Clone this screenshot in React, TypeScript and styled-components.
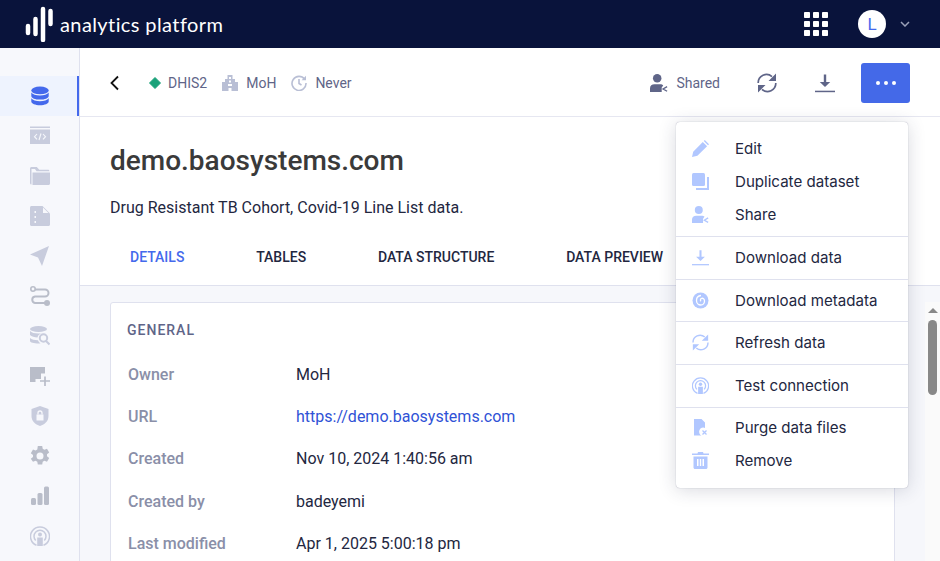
import React from 'react';
import styled, { createGlobalStyle } from 'styled-components';

const GlobalStyle = createGlobalStyle`
  html, body {
    margin: 0;
    padding: 0;
    height: 100%;
    overflow: hidden;
    background: #fff;
    font-family: Roboto, "Liberation Sans", sans-serif;
  }
  * { box-sizing: border-box; }
`;

const Page = styled.div`
  position: relative;
  width: 940px;
  height: 561px;
  display: flex;
  flex-direction: column;
  overflow: hidden;
`;

const TopBar = styled.header`
  height: 48px;
  flex: none;
  background: #09133b;
  display: flex;
  align-items: center;
  padding: 0 30px 0 25px;
`;

const Logo = styled.div`
  display: flex;
  align-items: center;
  gap: 6px;
  flex: 1;
`;

const LogoText = styled.span`
  color: #fff;
  font-family: Lato, sans-serif;
  font-size: 20px;
  font-weight: 400;
  letter-spacing: 0.4px;
  margin-top: -1px;
`;

const Avatar = styled.div`
  width: 28px;
  height: 28px;
  border-radius: 50%;
  background: #fff;
  color: #4469ec;
  font-size: 17px;
  display: flex;
  align-items: center;
  justify-content: center;
  margin: 0 14px 0 30px;
`;

const Body = styled.div`
  flex: 1;
  display: flex;
  min-height: 0;
`;

const Sidebar = styled.nav`
  width: 80px;
  flex: none;
  background: #f7f8fc;
  border-right: 1px solid #dfe1ee;
  padding-top: 28px;
`;

const SideItem = styled.div<{ $active?: boolean; $grey?: boolean }>`
  height: 40px;
  display: flex;
  align-items: center;
  justify-content: center;
  color: ${p => (p.$active ? '#4469ec' : p.$grey ? '#b9bdc9' : '#c8ccdd')};
  background: ${p => (p.$active ? '#eef3fe' : 'transparent')};
  box-shadow: ${p => (p.$active ? 'inset -2px 0 0 #4469ec' : 'none')};
`;

const Main = styled.main`
  flex: 1;
  min-width: 0;
  display: flex;
  flex-direction: column;
`;

const ActionBar = styled.div`
  height: 69px;
  flex: none;
  border-bottom: 1px solid #e6e7f1;
  display: flex;
  align-items: center;
  padding: 2px 30px 0 30px;
`;

const BackButton = styled.div`
  display: flex;
  margin-right: 29px;
  color: #111;
`;

const Meta = styled.span`
  display: flex;
  align-items: center;
  gap: 8px;
  color: #5f6588;
  font-size: 14px;
  margin-right: 15px;
`;

const Spacer = styled.div`
  flex: 1;
`;

const IconAction = styled.div<{ $gap: number }>`
  display: flex;
  align-items: center;
  color: #5f6588;
  margin-left: ${p => p.$gap}px;
`;

const MoreButton = styled.div`
  width: 49px;
  height: 40px;
  border-radius: 3px;
  background: #4469e8;
  display: flex;
  align-items: center;
  justify-content: center;
  gap: 4px;
  margin-left: 26px;
`;

const Dot = styled.i`
  width: 4px;
  height: 4px;
  border-radius: 50%;
  background: #fff;
`;

const TitleBlock = styled.section`
  flex: none;
  padding: 26px 30px 0;
  border-bottom: 1px solid #dfe1ee;
  height: 169px;
`;

const Title = styled.h1`
  margin: 0;
  font-size: 28px;
  line-height: 36px;
  font-weight: 500;
  color: #3a3a3a;
`;

const Description = styled.p`
  margin: 19px 0 0;
  font-size: 16px;
  line-height: 20px;
  color: #23273f;
`;

const Tabs = styled.div`
  display: flex;
  gap: 71.8px;
  padding-left: 20px;
  margin-top: 29px;
`;

const Tab = styled.span<{ $active?: boolean }>`
  font-size: 14px;
  line-height: 20px;
  font-weight: 500;
  text-transform: uppercase;
  color: ${p => (p.$active ? '#4469ec' : '#23273f')};
`;

const ContentRow = styled.div`
  flex: 1;
  min-height: 0;
  display: flex;
  background: #f6f7fb;
  padding-top: 16px;
`;

const Content = styled.div`
  flex: 1;
  min-width: 0;
  padding: 0 30px;
`;

const Card = styled.div`
  background: #fff;
  border: 1px solid #dfe1ee;
  border-radius: 3px;
  padding: 17px 16px 0 17px;
  height: 400px;
`;

const CardTitle = styled.h2`
  margin: 0 0 13px -1px;
  font-size: 14px;
  line-height: 20px;
  font-weight: 500;
  letter-spacing: 1px;
  color: #5f6588;
`;

const InfoRow = styled.div`
  display: flex;
  height: 42.3px;
  align-items: center;
  font-size: 16px;
`;

const InfoLabel = styled.span`
  width: 168px;
  font-weight: 500;
  color: #8a8fa8;
`;

const InfoValue = styled.span`
  color: #23273f;
`;

const InfoLink = styled.span`
  color: #2f52d6;
`;

const ScrollTrack = styled.div`
  width: 15px;
  flex: none;
  background: #fafafa;
  display: flex;
  flex-direction: column;
  align-items: center;
  padding-top: 6px;
`;

const ScrollArrow = styled.div`
  width: 0;
  height: 0;
  border-left: 5px solid transparent;
  border-right: 5px solid transparent;
  border-bottom: 5px solid #888;
  margin-bottom: 7px;
`;

const ScrollThumb = styled.div`
  width: 9px;
  height: 75px;
  border-radius: 5px;
  background: #888;
`;

const Menu = styled.div`
  position: absolute;
  left: 676px;
  top: 122px;
  width: 232px;
  height: 366px;
  background: #fff;
  border-radius: 4px;
  box-shadow: 0 0 1px rgba(40, 44, 80, 0.45), 0 2px 18px rgba(40, 44, 80, 0.18);
`;

const MenuSection = styled.div`
  padding: 4.1px 0 4.65px;
  border-top: 1px solid #dfe1ee;
  &:first-child {
    border-top: none;
    padding: 9.5px 0 5.35px;
  }
  &:last-child {
    padding: 3.4px 0 0;
  }
`;

const MenuItem = styled.div`
  height: 33px;
  display: flex;
  align-items: center;
  padding-left: 16px;
  color: #23273f;
  font-family: Inter, sans-serif;
  font-size: 15.1px;
`;

const MenuIcon = styled.span`
  width: 43px;
  flex: none;
  display: flex;
  color: #b1c7ff;
`;

type IconProps = { size?: number };

const Svg = ({ size = 20, children }: IconProps & { children: React.ReactNode }) => (
  <svg width={size} height={size} viewBox="0 0 20 20" fill="currentColor">
    {children}
  </svg>
);

const DatabaseIcon = () => (
  <Svg>
    <ellipse cx="10" cy="4.4" rx="8.7" ry="3.9" />
    <path d="M1.3 6.6c1.3 2 4.7 3 8.7 3s7.400-1 8.700-3v3.300c0 2.100-3.900 3.700-8.700 3.700s-8.700-1.600-8.700-3.700z" />
    <path d="M1.300 12.300c1.300 2 4.700 3 8.700 3s7.400-1 8.700-3v3.300c0 2.100-3.900 3.700-8.700 3.700s-8.700-1.600-8.700-3.700z" />
  </Svg>
);

const CodeIcon = () => (
  <Svg>
    <rect x="0" y="0.500" width="20" height="1.500" />
    <path d="M0 3.500h20V18H0z" />
    <path d="M7 8l-2.500 2.700L7 13.400M13 8l2.500 2.700L13 13.400M11 7.500l-2 6.500" fill="none" stroke="#f7f8fc" strokeWidth="1.100" />
  </Svg>
);

const FolderIcon = () => (
  <Svg>
    <path d="M0 2.500C0 1.700.7 1 1.500 1h5.300l2.500 2.700h8.700c.8 0 1.500.7 1.500 1.500h-13L5 3H1.500v15.500A1.500 1.500 0 0 1 0 17z" />
    <path d="M2.500 6.500H20V17.500c0 .8-.7 1.500-1.500 1.500h-16z" />
  </Svg>
);

const FileIcon = () => (
  <Svg>
    <path d="M1.500 0H12.500L20 7.500V18.500c0 .8-.7 1.500-1.500 1.500H1.500C.7 20 0 19.300 0 18.500V1.500C0 .7.7 0 1.500 0z" />
    <path d="M13 1.500V7h5.500zM4.500 5h1.500v2H4.500zM4.500 10h1.500v2H4.500zM4.500 15h1.500v2H4.500z" fill="#f7f8fc" />
  </Svg>
);

const SendIcon = () => (
  <Svg>
    <path d="M19 0L0 8.500l8 3 4 8.500z" />
  </Svg>
);

const RouteIcon = () => (
  <Svg>
    <path d="M3.500 3.500H15a3.500 3.500 0 0 1 0 7H5a3.300 3.300 0 0 0 0 6.500h11" fill="none" stroke="currentColor" strokeWidth="2" />
    <circle cx="3" cy="3" r="2.200" fill="#f7f8fc" stroke="currentColor" strokeWidth="1.600" />
    <circle cx="17" cy="17" r="3" />
  </Svg>
);

const DataSearchIcon = () => (
  <Svg>
    <ellipse cx="8.500" cy="3" rx="8.500" ry="3" />
    <path d="M0 5c1.500 1.700 4.500 2.500 8.500 2.500 1.500 0 3-.1 4.300-.5-2.500.3-5 2-5.300 4.500C4.500 11.400 1.500 10.500 0 9zM0 12c1.600 1.400 4.500 2.200 8 2.300.5 1.200 1.300 2.300 2.500 3-.7.100-1.300.200-2 .200C4 17.500 0 16.500 0 15z" />
    <circle cx="13.500" cy="12" r="3.700" fill="none" stroke="currentColor" strokeWidth="2" />
    <path d="M16 15l3.500 3.500" stroke="currentColor" strokeWidth="2" />
  </Svg>
);

const AddBlockIcon = () => (
  <Svg>
    <path d="M0 1h15v6.500h-4V13H5.500v3H0z" />
    <path d="M15 10.500v9.500M10 15h10" stroke="currentColor" strokeWidth="1.700" fill="none" />
  </Svg>
);

const ShieldIcon = () => (
  <Svg>
    <path d="M10 0l8.500 3v7c0 5-3.600 8.500-8.500 10-4.900-1.500-8.500-5-8.500-10V3z" />
    <path d="M6.500 8.500h7v6h-7z" fill="#f7f8fc" />
    <path d="M8 8.500V7a2 2 0 0 1 4 0v1.500" fill="none" stroke="#f7f8fc" strokeWidth="1.300" />
  </Svg>
);

const GearIcon = () => (
  <Svg>
    <path
      fillRule="evenodd"
      d="M7.800 0h4.400l.5 2.800 1.700.9 2.600-1 2.200 3.800-2.200 1.800v1.900l2.200 1.800-2.200 3.800-2.600-1-1.700.9-.5 2.800H7.800l-.5-2.800-1.700-.9-2.600 1L.8 12.700 3 10.900V9L.8 7.200 3 3.400l2.600 1 1.700-.9zM10 6.500a3.500 3.500 0 1 0 0 7 3.500 3.500 0 0 0 0-7z"
    />
  </Svg>
);

const SignalIcon = () => (
  <Svg>
    <rect x="1" y="12" width="5" height="7" rx="1.500" />
    <rect x="7.500" y="7" width="5" height="12" rx="1.500" />
    <rect x="14" y="0.500" width="5" height="18.500" rx="1.500" />
  </Svg>
);

const PodcastIcon = ({ size = 20 }: IconProps) => (
  <Svg size={size}>
    <path d="M6.500 19.300A9.500 9.500 0 1 1 13.500 19.300" fill="none" stroke="currentColor" strokeWidth="1.500" />
    <path d="M5.700 14.500a6 6 0 1 1 8.600 0" fill="none" stroke="currentColor" strokeWidth="1.500" />
    <circle cx="10" cy="8.500" r="2" />
    <path d="M7.200 11.500h5.600V20H7.200z" />
  </Svg>
);

const ChevronLeft = () => (
  <svg width="10" height="16" viewBox="0 0 10 16" fill="none" stroke="currentColor" strokeWidth="1.800">
    <path d="M8 1.500L1.500 8 8 14.500" />
  </svg>
);

const Diamond = () => (
  <svg width="11" height="14" viewBox="0 0 11 14" overflow="visible">
    <path d="M6 1.500L11.500 7 6 12.500.5 7z" fill="#1ba27a" stroke="#1ba27a" strokeLinejoin="round" />
  </svg>
);

const BuildingIcon = () => (
  <svg width="16" height="16" viewBox="0 0 16 16" fill="#b9bfd5">
    <path fillRule="evenodd" d="M0 7h3V4h2.500V0h5v4H13v3h3v9H9.500v-3h-3v3H0zM7 2v2h2V2zM7 5.500v2h2v-2zM6 9v2h4V9z" />
  </svg>
);

const HistoryIcon = () => (
  <svg width="16" height="16" viewBox="0 0 16 16" fill="none" stroke="#b9bfd5" strokeWidth="1.600">
    <path d="M13.600 4.200A7 7 0 1 0 15 8" />
    <path d="M15 .8v4.400h-4.400z" fill="#b9bfd5" stroke="none" />
    <path d="M8 4v4.500l2.500 1.500" />
  </svg>
);

const UserShareIcon = ({ size = 20 }: IconProps) => (
  <Svg size={size}>
    <circle cx="8" cy="4.800" r="4.700" />
    <path d="M0 20v-4c0-3 2-4.500 5-4.500h6c2 0 3 .5 3.700 1.200L13 15v5z" />
    <path d="M19 14l-4.500 2.700L19 19.200" fill="none" stroke="currentColor" strokeWidth="1.500" />
  </Svg>
);

const RefreshIcon = ({ size = 20 }: IconProps) => (
  <Svg size={size}>
    <path d="M1.200 10A8.300 8.300 0 0 1 15 3.600M18.800 10A8.300 8.300 0 0 1 5 16.400" fill="none" stroke="currentColor" strokeWidth="1.700" />
    <path d="M19 .5V8h-7.500zM1 19.500V12h7.500z" />
  </Svg>
);

const DownloadIcon = ({ size = 20 }: IconProps) => (
  <Svg size={size}>
    <path d="M8.800 1.500h2.400v7.500h4L10 14 4.800 9h4z" />
    <rect x="0" y="17.700" width="20" height="1.500" />
  </Svg>
);

const PencilIcon = () => (
  <svg width="17" height="17" viewBox="0 0 17 17" fill="currentColor">
    <path d="M0 17l1.200-5.300L10.800 2l4.300 4.300-9.700 9.500zM11.800 1l1-1 4.200 4.200-1 1z" />
  </svg>
);

const DuplicateIcon = () => (
  <svg width="17" height="17" viewBox="0 0 17 17" fill="currentColor">
    <rect x="0" y="0" width="13" height="13" rx="1.500" />
    <path d="M15 4h2v13H4v-2h11z" />
  </svg>
);

const SpiralIcon = () => (
  <svg width="17" height="17" viewBox="0 0 17 17">
    <circle cx="8.500" cy="8.500" r="8" fill="currentColor" />
    <path d="M9 3.500c-3 .3-4.500 2.500-4.500 5s2 4.500 4.300 4.500 3.700-2 3.700-4-1.500-3-2.800-2.700-1.700 2.200-.7 3" fill="none" stroke="#fff" strokeWidth="1.300" />
  </svg>
);

const PurgeFileIcon = () => (
  <svg width="17" height="17" viewBox="0 0 17 17" fill="currentColor">
    <path d="M2 0h7.500L13 3.500V9a4 4 0 0 0-3.500 7.500H2z" />
    <path d="M10.500 11.500l4 4M14.500 11.500l-4 4" stroke="currentColor" strokeWidth="1.300" />
  </svg>
);

const TrashIcon = () => (
  <svg width="17" height="17" viewBox="0 0 17 17" fill="currentColor">
    <path d="M6 0h5l.5 1.500H17V3H0V1.500h5.500z" />
    <path fillRule="evenodd" d="M1.500 4.500h14V15.500c0 .8-.7 1.500-1.500 1.500H3c-.8 0-1.500-.7-1.500-1.500zM5 7v7h1.500V7zM7.800 7v7h1.400V7zM10.500 7v7H12V7z" />
  </svg>
);

const LogoMark = () => (
  <svg width="29" height="36" viewBox="0 0 29 36" stroke="#fff" strokeWidth="4.500" strokeLinecap="round">
    <path d="M3 20v7M10.500 13v15M18 3v31M25.500 5v13" />
  </svg>
);

const AppsGrid = () => (
  <svg width="24" height="24" viewBox="0 0 24 24" fill="#fff">
    {[0, 9, 18].flatMap(y =>
      [0, 9, 18].map(x => <rect key={`${x}-${y}`} x={x} y={y} width="6" height="6" rx="0.800" />)
    )}
  </svg>
);

const sideIcons = [
  { name: 'code', icon: <CodeIcon /> },
  { name: 'folder', icon: <FolderIcon /> },
  { name: 'file', icon: <FileIcon /> },
  { name: 'send', icon: <SendIcon /> },
  { name: 'route', icon: <RouteIcon />, grey: true },
  { name: 'search', icon: <DataSearchIcon /> },
  { name: 'add', icon: <AddBlockIcon />, grey: true },
  { name: 'shield', icon: <ShieldIcon /> },
  { name: 'gear', icon: <GearIcon />, grey: true },
  { name: 'signal', icon: <SignalIcon />, grey: true },
  { name: 'podcast', icon: <PodcastIcon /> },
];

const tabs = ['Details', 'Tables', 'Data structure', 'Data preview'];

const menuSections = [
  [
    { label: 'Edit', icon: <PencilIcon /> },
    { label: 'Duplicate dataset', icon: <DuplicateIcon /> },
    { label: 'Share', icon: <UserShareIcon size={17} /> },
  ],
  [{ label: 'Download data', icon: <DownloadIcon size={17} /> }],
  [{ label: 'Download metadata', icon: <SpiralIcon /> }],
  [{ label: 'Refresh data', icon: <RefreshIcon size={17} /> }],
  [{ label: 'Test connection', icon: <PodcastIcon size={17} /> }],
  [
    { label: 'Purge data files', icon: <PurgeFileIcon /> },
    { label: 'Remove', icon: <TrashIcon /> },
  ],
];

export default function App() {
  return (
    <Page>
      <GlobalStyle />
      <TopBar>
        <Logo>
          <LogoMark />
          <LogoText>analytics platform</LogoText>
        </Logo>
        <AppsGrid />
        <Avatar>L</Avatar>
        <svg width="10" height="6" viewBox="0 0 10 6" fill="none" stroke="#9aa0b8" strokeWidth="1.500">
          <path d="M1 1l4 4 4-4" />
        </svg>
      </TopBar>
      <Body>
        <Sidebar>
          <SideItem $active>
            <DatabaseIcon />
          </SideItem>
          {sideIcons.map(item => (
            <SideItem key={item.name} $grey={item.grey}>
              {item.icon}
            </SideItem>
          ))}
        </Sidebar>
        <Main>
          <ActionBar>
            <BackButton>
              <ChevronLeft />
            </BackButton>
            <Meta>
              <Diamond /> DHIS2
            </Meta>
            <Meta>
              <BuildingIcon /> MoH
            </Meta>
            <Meta>
              <HistoryIcon /> Never
            </Meta>
            <Spacer />
            <Meta>
              <UserShareIcon size={18} /> Shared
            </Meta>
            <IconAction $gap={22}>
              <RefreshIcon />
            </IconAction>
            <IconAction $gap={38}>
              <DownloadIcon />
            </IconAction>
            <MoreButton>
              <Dot />
              <Dot />
              <Dot />
            </MoreButton>
          </ActionBar>
          <TitleBlock>
            <Title>demo.baosystems.com</Title>
            <Description>Drug Resistant TB Cohort, Covid-19 Line List data.</Description>
            <Tabs>
              {tabs.map((tab, i) => (
                <Tab key={tab} $active={i === 0}>
                  {tab}
                </Tab>
              ))}
            </Tabs>
          </TitleBlock>
          <ContentRow>
            <Content>
              <Card>
                <CardTitle>GENERAL</CardTitle>
                <InfoRow>
                  <InfoLabel>Owner</InfoLabel>
                  <InfoValue>MoH</InfoValue>
                </InfoRow>
                <InfoRow>
                  <InfoLabel>URL</InfoLabel>
                  <InfoLink>https://demo.baosystems.com</InfoLink>
                </InfoRow>
                <InfoRow>
                  <InfoLabel>Created</InfoLabel>
                  <InfoValue>Nov 10, 2024 1:40:56 am</InfoValue>
                </InfoRow>
                <InfoRow>
                  <InfoLabel>Created by</InfoLabel>
                  <InfoValue>badeyemi</InfoValue>
                </InfoRow>
                <InfoRow>
                  <InfoLabel>Last modified</InfoLabel>
                  <InfoValue>Apr 1, 2025 5:00:18 pm</InfoValue>
                </InfoRow>
              </Card>
            </Content>
            <ScrollTrack>
              <ScrollArrow />
              <ScrollThumb />
            </ScrollTrack>
          </ContentRow>
        </Main>
      </Body>
      <Menu>
        {menuSections.map(section => (
          <MenuSection key={section[0].label}>
            {section.map(item => (
              <MenuItem key={item.label}>
                <MenuIcon>{item.icon}</MenuIcon>
                {item.label}
              </MenuItem>
            ))}
          </MenuSection>
        ))}
      </Menu>
    </Page>
  );
}
